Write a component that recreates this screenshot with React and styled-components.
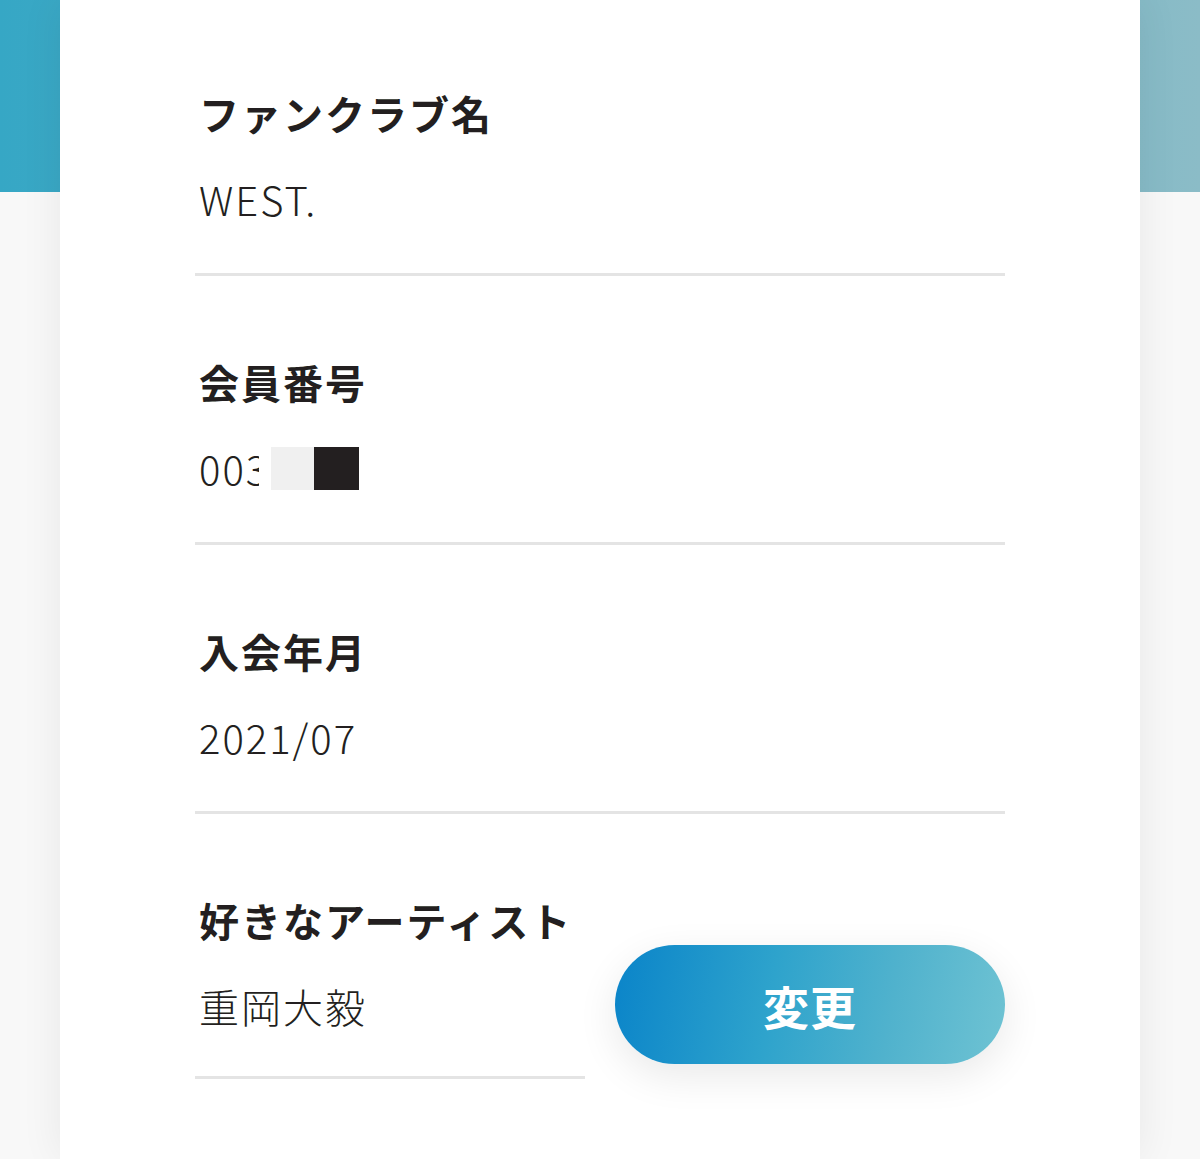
import React from "react";
import styled, { createGlobalStyle } from "styled-components";

const GlobalStyle = createGlobalStyle`
  html, body {
    margin: 0;
    padding: 0;
  }
  body {
    background:
      linear-gradient(to right, #36a7c5 0%, #5fb0c6 50%, #8bbcc7 100%) top left / 100% 192px no-repeat,
      #f8f8f8;
    font-family: "Noto Sans CJK JP", "Noto Sans", sans-serif;
    color: #231f20;
  }
`;

const Page = styled.div`
  display: flex;
  justify-content: center;
  min-height: 1159px;
  overflow: hidden;
`;

const Card = styled.main`
  width: 1080px;
  min-height: 1159px;
  background: #ffffff;
  box-shadow: 0 0 40px rgba(0, 0, 0, 0.07);
  padding: 7px 135px 0;
  box-sizing: border-box;
`;

const Section = styled.section`
  padding: 82px 0 50px;
  border-bottom: 3px solid #e4e4e4;
`;

const Label = styled.h2`
  margin: 0;
  padding: 0 4px;
  font-size: 40px;
  line-height: 48px;
  font-weight: 700;
  letter-spacing: 2px;
  white-space: nowrap;
`;

const Value = styled.p`
  margin: 38px 0 0;
  padding: 0 4px;
  font-size: 40px;
  line-height: 48px;
  font-weight: 300;
  letter-spacing: 2px;
  display: flex;
  align-items: center;
`;

const Redact = styled.span`
  display: inline-block;
  width: ${(p) => p.$w || 44}px;
  height: 43px;
  background: ${(p) => p.$color};
  margin-left: ${(p) => p.$ml || 0}px;
`;

const LastRow = styled.div`
  display: flex;
  align-items: flex-end;
  justify-content: space-between;
`;

const LastSection = styled.section`
  width: 390px;
  padding: 82px 0 46px;
  border-bottom: 3px solid #e4e4e4;
`;

const Button = styled.button`
  width: 390px;
  height: 119px;
  margin-bottom: 15px;
  border: none;
  border-radius: 60px;
  background: linear-gradient(100deg, #0a84c9 0%, #2ea3cc 40%, #50b2cd 70%, #6fc3d3 100%);
  box-shadow: 0 12px 40px rgba(0, 0, 0, 0.09);
  color: #ffffff;
  font-family: "Noto Sans CJK JP", sans-serif;
  font-size: 46px;
  font-weight: 700;
  letter-spacing: 1px;
  cursor: pointer;
`;

export default function App() {
  return (
    <>
      <GlobalStyle />
      <Page>
        <Card>
          <Section>
            <Label>ファンクラブ名</Label>
            <Value>WEST.</Value>
          </Section>
          <Section>
            <Label>会員番号</Label>
            <Value>
              003
              <Redact $color="#ffffff" $w={12} $ml={-10} />
              <Redact $color="#f0f0f0" $w={43} />
              <Redact $color="#231f20" $w={45} />
            </Value>
          </Section>
          <Section>
            <Label>入会年月</Label>
            <Value>2021/07</Value>
          </Section>
          <LastRow>
            <LastSection>
              <Label>好きなアーティスト</Label>
              <Value>重岡大毅</Value>
            </LastSection>
            <Button>変更</Button>
          </LastRow>
        </Card>
      </Page>
    </>
  );
}
